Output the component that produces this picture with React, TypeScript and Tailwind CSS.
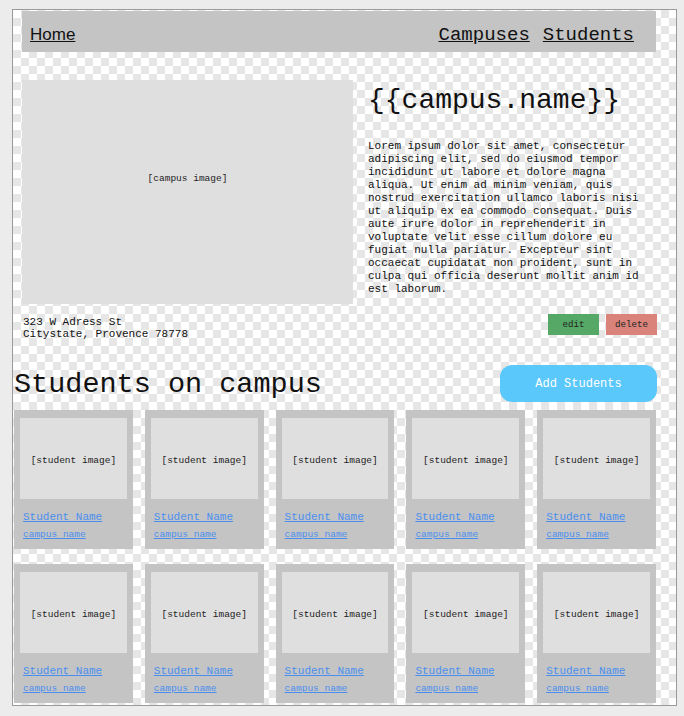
import React from "react";

const mono = "font-['Liberation_Mono','DejaVu_Sans_Mono',monospace]";

function Card() {
  return (
    <div className="h-[139px] bg-[#c4c4c4] px-[6px] pt-[8px]">
      <div className="h-[81px] bg-[#dfdfdf] flex items-center justify-center pt-[5px] text-[9.5px] text-[#222]">
        [student image]
      </div>
      <div className="pl-[3px] pt-[12px]">
        <a href="#" className="block text-[11px] leading-[13px] text-[#4a8fef] underline">
          Student Name
        </a>
        <a href="#" className="block mt-[5px] text-[9.5px] leading-[12px] text-[#4a8fef] underline">
          campus name
        </a>
      </div>
    </div>
  );
}

export default function App() {
  const lorem =
    "Lorem ipsum dolor sit amet, consectetur adipiscing elit, sed do eiusmod tempor incididunt ut labore et dolore magna aliqua. Ut enim ad minim veniam, quis nostrud exercitation ullamco laboris nisi ut aliquip ex ea commodo consequat. Duis aute irure dolor in reprehenderit in voluptate velit esse cillum dolore eu fugiat nulla pariatur. Excepteur sint occaecat cupidatat non proident, sunt in culpa qui officia deserunt mollit anim id est laborum.";
  return (
    <div className={`min-h-screen bg-[#ececec] pl-[12px] pt-[9px] ${mono} text-[#111]`}>
      <div className="w-[665px] h-[697px] border border-[#9a9a9a] overflow-hidden bg-[image:conic-gradient(#e6e6e6_25%,#ffffff_0_50%,#e6e6e6_0_75%,#ffffff_0)] bg-[length:16px_16px]">
        <nav className="ml-[9px] mt-[1px] w-[634px] h-[41px] bg-[#c4c4c4] flex items-center justify-between pl-[8px] pr-[22px] pt-[7px] text-[19px]">
          <a href="#" className="underline font-['Liberation_Sans',Arial,sans-serif] text-[17px]">
            Home
          </a>
          <div className="flex gap-[13px]">
            <a href="#" className="underline">Campuses</a>
            <a href="#" className="underline">Students</a>
          </div>
        </nav>

        <div className="ml-[9px] mt-[28px] flex">
          <div className="w-[331px] h-[224px] bg-[#dfdfdf] flex items-center justify-center pb-[26px] text-[9.5px] text-[#222]">
            [campus image]
          </div>
          <div className="ml-[15px] w-[280px]">
            <h1 className="mt-[6px] text-[28px] leading-[30px]">{"{{campus.name}}"}</h1>
            <p className="mt-[24px] text-[11px] leading-[13px]">{lorem}</p>
          </div>
        </div>

        <div className="ml-[10px] mt-[10px] w-[634px] flex justify-between items-start">
          <div className="mt-[2px] text-[11px] leading-[12px]">
            <div>323 W Adress St</div>
            <div>Citystate, Provence 78778</div>
          </div>
          <div className="flex gap-[7px]">
            <button className="w-[51px] h-[21px] bg-[#55a865] text-[9.2px] text-[#222]">edit</button>
            <button className="w-[51px] h-[21px] bg-[#d9837b] text-[9.2px] text-[#222]">delete</button>
          </div>
        </div>

        <div className="ml-[1px] mt-[25px] w-[643px] h-[37px] flex items-start justify-between">
          <h2 className="mt-[2px] text-[28.5px] leading-[36px]">Students on campus</h2>
          <button className="w-[157px] h-[37px] rounded-[12px] bg-[#5bc8fb] text-white text-[12px]">
            Add Students
          </button>
        </div>

        <div className="ml-[1px] mt-[8px] w-[642px] grid grid-cols-5 gap-x-[12px] gap-y-[15px]">
          {Array.from({ length: 10 }).map((_, i) => (
            <Card key={i} />
          ))}
        </div>
      </div>
    </div>
  );
}
